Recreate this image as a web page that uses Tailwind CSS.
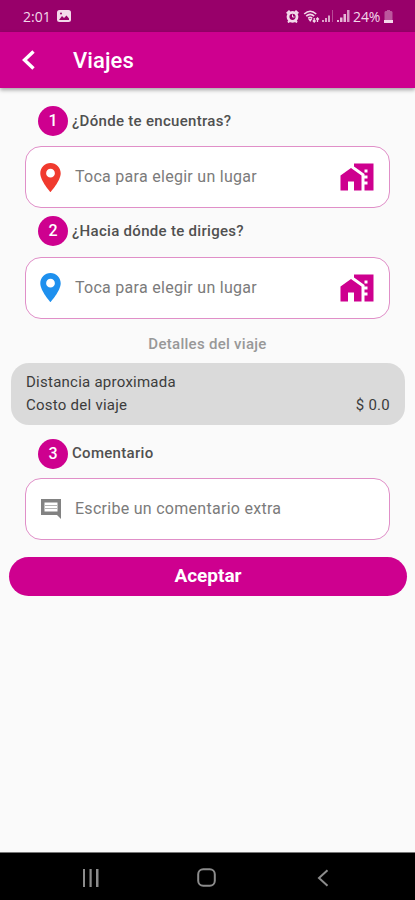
<!DOCTYPE html>
<html lang="es">
  <head>
    <meta charset="UTF-8" />
    <meta name="viewport" content="width=device-width, initial-scale=1.0" />
    <title>Viajes</title>
    <script src="https://cdn.jsdelivr.net/npm/@tailwindcss/browser@4"></script>
  </head>
  <body class="bg-[#fafafa] font-['Roboto',sans-serif]">
    <div class="flex h-[900px] w-[415px] flex-col overflow-hidden">
      <!-- status bar -->
      <div class="flex h-8 shrink-0 items-center bg-[#98006a] pl-[23px] pr-[22px] text-[#f3d9ea]">
        <span class="w-[34px] font-['Open_Sans',sans-serif] text-[14px] font-medium">2:01</span>
        <svg class="h-3 w-[14px]" viewBox="0 0 14 12">
          <rect width="14" height="12" rx="2.5" fill="currentColor" />
          <path d="M2 10l3-4 2 2 2.500-2.500L12 8.500V10z" fill="#98006a" />
          <circle cx="4" cy="3.500" r="1" fill="#98006a" />
        </svg>
        <div class="ml-auto flex items-center">
          <svg class="h-[13px] w-[13px]" viewBox="0 0 13 13" fill="none" stroke="currentColor">
            <circle cx="6.500" cy="6.800" r="4.500" stroke-width="2.800" />
            <path d="M.7 3.500l3-2.800M12.300 3.500l-3-2.800M2 12.500l2-2M11 12.500l-2-2" stroke-width="2" />
            <path d="M6.500 4.500V7h2" stroke-width="1" />
          </svg>
          <svg class="ml-1 h-[13px] w-[17px]" viewBox="0 0 16 13" fill="none" stroke="currentColor" stroke-width="1.600">
            <path d="M.7 4q6-5.500 12 0M2.700 6.200q4-3.500 8 0M4.700 8.300q2-1.800 4 0" />
            <path d="M6.700 12l-2-3h4z" fill="currentColor" stroke="none" />
            <path d="M10.700 12V8M9.300 10.500l1.400 1.500 1.400-1.500M14 12V8M12.700 9.500L14 8l1.400 1.500" stroke-width="1.300" />
          </svg>
          <svg class="ml-0.5 h-3 w-3" viewBox="0 0 12 12" fill="currentColor">
            <path d="M0 10h2v2H0zM3 8h2v4H3zM6 5.500h2V12H6z" opacity=".75" />
            <path d="M10 0h1v12h-1z" opacity=".35" />
          </svg>
          <svg class="ml-[3px] h-3 w-[13px]" viewBox="0 0 13 12" fill="currentColor">
            <path d="M0 10h2v2H0zM3 7.500h2.500V12H3zM6.500 4H9v8H6.500z" opacity=".85" />
            <path d="M10 0h2.500v12H10z" opacity=".7" />
          </svg>
          <span class="ml-[3px] w-[31px] whitespace-nowrap font-['Open_Sans',sans-serif] text-[14px] font-medium tracking-[-0.1px]">24%</span>
          <svg class="h-[13px] w-[9px]" viewBox="0 0 9 13" fill="currentColor">
            <path d="M3 0h3v1h1.500L8.500 2v8h-8V2L1.500 1H3z" opacity=".4" />
            <path d="M0 10h9v3H0z" />
          </svg>
        </div>
      </div>

      <!-- app bar -->
      <header class="flex h-14 shrink-0 items-center bg-[#ce008f] pl-[21px] text-white shadow-[0_2px_4px_rgba(0,0,0,0.35)]">
        <svg class="h-5 w-[15px]" viewBox="0 0 15 20" fill="none" stroke="currentColor" stroke-width="3.400">
          <path d="M12.500 1.500L3.500 10l9 8.500" />
        </svg>
        <h1 class="ml-[37px] text-[22px] font-medium tracking-[0.1px]">Viajes</h1>
      </header>

      <main class="flex flex-1 flex-col pt-[18px]">
        <div class="flex h-[30px] items-center gap-1 pl-[38px]">
          <span class="flex h-[30px] w-[30px] items-center justify-center rounded-full bg-[#ce008f] text-base font-medium text-white">1</span>
          <span class="text-[15px] font-medium tracking-[0.3px] text-[#505050]">¿Dónde te encuentras?</span>
        </div>
        <div class="mx-[25px] mt-2.5 flex h-[62px] items-center rounded-[16px] border border-[#e08fc8] bg-white pl-[7px] pr-3.5">
          <svg class="h-[35px] w-[35px] fill-[#f03a2e]" viewBox="0 0 24 24">
            <path d="M12 2C8.130 2 5 5.130 5 9c0 5.250 7 13 7 13s7-7.750 7-13c0-3.870-3.130-7-7-7zm0 10a3 3 0 0 1 0-6 3 3 0 0 1 0 6z" />
          </svg>
          <span class="ml-[7px] text-base tracking-[0.28px] text-[#7b7b7b]">Toca para elegir un lugar</span>
          <svg class="ml-auto h-9 w-9 fill-[#ce008f]" viewBox="0 0 24 24">
            <path d="M1 11v10h5v-6h4v6h5V11L8 6z" />
            <path d="M10 3v1.970l7 5V11h2v2h-2v2h2v2h-2v4h6V3H10zm9 6h-2V7h2v2z" />
          </svg>
        </div>

        <div class="mt-2 flex h-[30px] items-center gap-1 pl-[38px]">
          <span class="flex h-[30px] w-[30px] items-center justify-center rounded-full bg-[#ce008f] text-base font-medium text-white">2</span>
          <span class="text-[15px] font-medium tracking-[0.3px] text-[#505050]">¿Hacia dónde te diriges?</span>
        </div>
        <div class="mx-[25px] mt-[10.5px] flex h-[62px] items-center rounded-[16px] border border-[#e08fc8] bg-white pl-[7px] pr-3.5">
          <svg class="h-[35px] w-[35px] fill-[#1e90ee]" viewBox="0 0 24 24">
            <path d="M12 2C8.130 2 5 5.130 5 9c0 5.250 7 13 7 13s7-7.750 7-13c0-3.870-3.130-7-7-7zm0 10a3 3 0 0 1 0-6 3 3 0 0 1 0 6z" />
          </svg>
          <span class="ml-[7px] text-base tracking-[0.28px] text-[#7b7b7b]">Toca para elegir un lugar</span>
          <svg class="ml-auto h-9 w-9 fill-[#ce008f]" viewBox="0 0 24 24">
            <path d="M1 11v10h5v-6h4v6h5V11L8 6z" />
            <path d="M10 3v1.970l7 5V11h2v2h-2v2h2v2h-2v4h6V3H10zm9 6h-2V7h2v2z" />
          </svg>
        </div>

        <h2 class="mt-[15.5px] text-center text-[15px] leading-5 font-medium tracking-[0.28px] text-[#989898]">Detalles del viaje</h2>
        <div class="ml-[11px] mr-2.5 mt-[9px] flex h-[62px] flex-col justify-center rounded-[18px] bg-[#dadada] px-[15px] text-[15px] leading-[23px] tracking-[0.25px] text-[#3c3c3c]">
          <p>Distancia aproximada</p>
          <p class="flex justify-between"><span>Costo del viaje</span><span>$ 0.0</span></p>
        </div>

        <div class="mt-[13px] flex h-[31px] items-center gap-1 pl-[38px]">
          <span class="flex h-[30px] w-[30px] items-center justify-center rounded-full bg-[#ce008f] text-base font-medium text-white">3</span>
          <span class="text-[15px] font-medium tracking-[0.3px] text-[#505050]">Comentario</span>
        </div>
        <div class="mx-[25px] mt-[9px] flex h-[62px] items-center rounded-[16px] border border-[#e08fc8] bg-white pl-[13px]">
          <svg class="h-6 w-6" viewBox="0 0 24 24">
            <path d="M22 2H2v16h16l4 4V2zM5.500 5.500h13v9h-13z" fill="#828282" fill-rule="evenodd" />
            <path d="M6 8h12v1H6zM6 11h12v1H6z" fill="#b5b5b5" />
          </svg>
          <span class="ml-3 text-base tracking-[0.28px] text-[#7b7b7b]">Escribe un comentario extra</span>
        </div>

        <button class="ml-[9px] mr-2 mt-[17px] h-[39px] rounded-full bg-[#ce008f] text-[19px] font-bold text-white">Aceptar</button>
      </main>

      <!-- system navigation -->
      <nav class="flex h-12 shrink-0 items-center border-t border-[#777] bg-black pl-[82px] pt-0.5 text-[#8c8c8c]">
        <svg class="h-[18px] w-[18px]" viewBox="0 0 18 18" fill="currentColor">
          <path d="M1 0h2v18H1zM7.500 0h2.200v18H7.500zM14 0h2.500v18H14z" />
        </svg>
        <svg class="ml-[97px] h-[19px] w-[19px]" viewBox="0 0 19 19" fill="none" stroke="currentColor" stroke-width="2">
          <rect x="1.200" y="1.200" width="16.600" height="16.600" rx="5" />
        </svg>
        <svg class="ml-[101px] h-[18px] w-3" viewBox="0 0 12 18" fill="none" stroke="currentColor" stroke-width="2">
          <path d="M10.500 1.300L2 9l8.500 7.700" />
        </svg>
      </nav>
    </div>
  </body>
</html>
